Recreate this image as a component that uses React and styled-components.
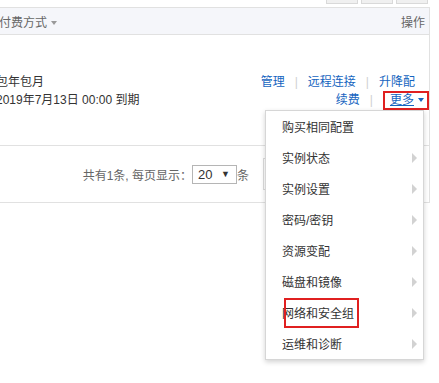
import React from 'react';
import styled, { createGlobalStyle } from 'styled-components';

const GlobalStyle = createGlobalStyle`
body {
  margin: 0;
  background: #fff;
  font-family: "Liberation Sans", "Noto Sans CJK SC", sans-serif;
  font-size: 12px;
  color: #333;
}
`;

const Page = styled.div`
position: relative;
width: 439px;
height: 383px;
overflow: hidden;
background: #fff;
`;

const Toolbar = styled.div`
height: 4px;
margin-bottom: 3px;
display: flex;
justify-content: flex-end;
align-items: flex-end;
gap: 3px;
padding-right: 11px;
overflow: hidden;
`;

const ToolButton = styled.div`
flex: 0 0 32px;
height: 30px;
box-sizing: border-box;
background: #f0f0f0;
border: 1px solid #d9d9d9;
`;

const Table = styled.div`
width: 434px;
margin-left: -4px;
box-sizing: border-box;
border-right: 1px solid #e1e1e1;
`;

const HeaderRow = styled.div`
height: 28px;
box-sizing: border-box;
display: flex;
justify-content: space-between;
align-items: center;
padding: 0 4px 0 3px;
background: #f5f6fa;
border-top: 1px solid #e1e1e1;
border-bottom: 1px solid #e1e1e1;
color: #666;
`;

const Caret = styled.span`
display: inline-block;
margin-left: 4px;
width: 0;
height: 0;
border-left: 3px solid transparent;
border-right: 3px solid transparent;
border-top: 4px solid ${p => p.$color || '#999'};
vertical-align: middle;
`;

const DataRow = styled.div`
height: 111px;
box-sizing: border-box;
display: flex;
justify-content: space-between;
padding: 38px 4px 0 0;
border-bottom: 1px solid #e1e1e1;
`;

const Cell = styled.div`
display: flex;
flex-direction: column;
align-items: ${p => (p.$right ? 'flex-end' : 'flex-start')};
`;

const Line = styled.div`
height: 18px;
line-height: 18px;
white-space: nowrap;
display: flex;
align-items: center;
margin-right: ${p => p.$inset || 0}px;
`;

const Link = styled.a`
color: #1565c0;
text-decoration: ${p => (p.$under ? 'underline' : 'none')};
cursor: pointer;
`;

const Sep = styled.span`
color: #d0d0d0;
margin: 0 10px;
`;

const MoreBox = styled.span`
display: flex;
align-items: center;
padding: 0 3px 0 5px;
margin-right: -4px;
height: 15px;
border: 2px solid #e02020;
`;

const PagerRow = styled.div`
height: 57px;
box-sizing: border-box;
display: flex;
justify-content: flex-end;
align-items: center;
padding-right: 6px;
border-bottom: 1px solid #e1e1e1;
color: #666;
`;

const SizeSelect = styled.div`
width: 45px;
height: 19px;
box-sizing: border-box;
border: 1px solid #b5b5b5;
display: flex;
align-items: center;
justify-content: space-between;
padding: 0 6px 0 5px;
color: #333;
font-size: 13px;
`;

const SmallArrow = styled.span`
font-size: 9px;
color: #333;
`;

const PagerBox = styled.div`
width: 160px;
height: 32px;
margin-left: 14px;
box-sizing: border-box;
border: 1px solid #ddd;
`;

const Menu = styled.ul`
position: absolute;
left: 265px;
top: 110px;
width: 159px;
margin: 0;
padding: 0;
list-style: none;
box-sizing: border-box;
background: #fff;
border: 1px solid #d6d6d6;
box-shadow: 0 2px 5px rgba(0, 0, 0, 0.18);
`;

const MenuItem = styled.li`
position: relative;
height: 31px;
display: flex;
align-items: center;
justify-content: space-between;
padding: 0 6px 0 16px;
color: #333;
`;

const SubArrow = styled.span`
width: 0;
height: 0;
border-top: 5px solid transparent;
border-bottom: 5px solid transparent;
border-left: 5px solid #d2d2d2;
`;

const Highlight = styled.span`
position: absolute;
left: 18px;
top: 1px;
width: 75px;
height: 30px;
box-sizing: border-box;
border: 2px solid #e02020;
`;

const menuItems = [
  { label: '购买相同配置', sub: false },
  { label: '实例状态', sub: true },
  { label: '实例设置', sub: true },
  { label: '密码/密钥', sub: true },
  { label: '资源变配', sub: true },
  { label: '磁盘和镜像', sub: true },
  { label: '网络和安全组', sub: true, marked: true },
  { label: '运维和诊断', sub: true },
];

export default function App() {
  return (
    <Page>
      <GlobalStyle />
      <Toolbar>
        <ToolButton />
        <ToolButton />
        <ToolButton />
      </Toolbar>
      <Table>
        <HeaderRow>
          <span>付费方式<Caret /></span>
          <span>操作</span>
        </HeaderRow>
        <DataRow>
          <Cell>
            <Line>包年包月</Line>
            <Line>2019年7月13日 00:00 到期</Line>
          </Cell>
          <Cell $right>
            <Line $inset={10}>
              <Link>管理</Link>
              <Sep>|</Sep>
              <Link>远程连接</Link>
              <Sep>|</Sep>
              <Link>升降配</Link>
            </Line>
            <Line>
              <Link>续费</Link>
              <Sep>|</Sep>
              <MoreBox>
                <Link $under>更多</Link>
                <Caret $color="#1565c0" />
              </MoreBox>
            </Line>
          </Cell>
        </DataRow>
        <PagerRow>
          <span>共有1条, 每页显示：</span>
          <SizeSelect>
            <span>20</span>
            <SmallArrow>▼</SmallArrow>
          </SizeSelect>
          <span>条</span>
          <PagerBox />
        </PagerRow>
      </Table>
      <Menu>
        {menuItems.map(item => (
          <MenuItem key={item.label}>
            <span>{item.label}</span>
            {item.sub && <SubArrow />}
            {item.marked && <Highlight />}
          </MenuItem>
        ))}
      </Menu>
    </Page>
  );
}
